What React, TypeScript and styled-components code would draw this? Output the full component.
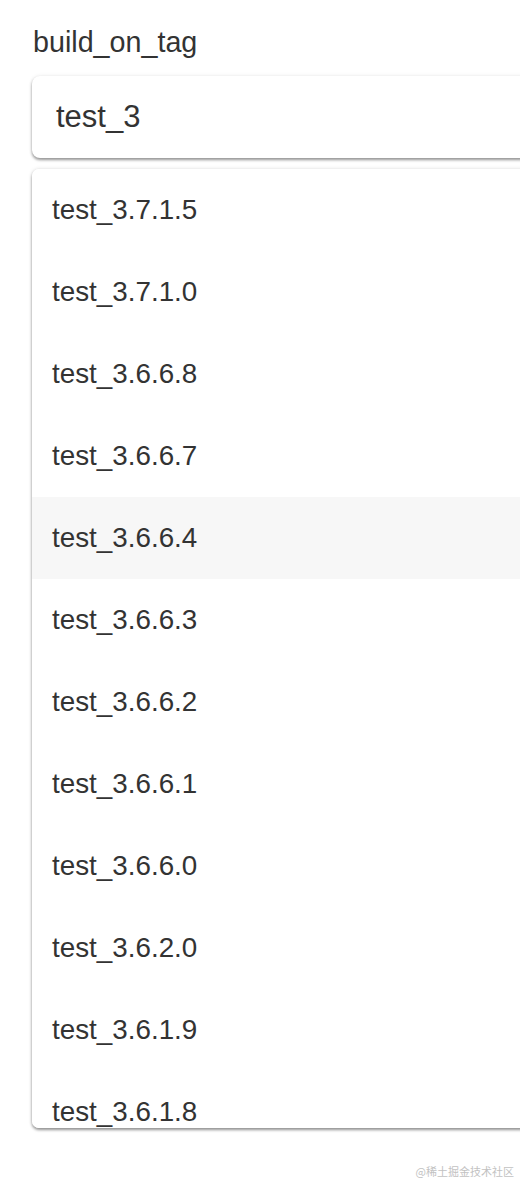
import React from 'react';
import styled, { createGlobalStyle } from 'styled-components';

const GlobalStyle = createGlobalStyle`
    html, body {
        margin: 0;
        padding: 0;
        background: #ffffff;
        font-family: "Liberation Sans", Arial, sans-serif;
        overflow: hidden;
    }
`;

const Page = styled.div`
    width: 520px;
    height: 1184px;
    padding: 24px 0 0 32px;
    box-sizing: border-box;
    position: relative;
    overflow: hidden;
`;

const Label = styled.div`
    font-size: 28.7px;
    line-height: 36px;
    color: #333333;
    margin: 0 0 16px 1px;
`;

const Input = styled.div`
    width: 520px;
    height: 82px;
    box-sizing: border-box;
    padding: 0 24px;
    display: flex;
    align-items: center;
    font-size: 31px;
    color: #333333;
    background: #ffffff;
    border-radius: 8px;
    box-shadow: 0 2px 3px rgba(0, 0, 0, 0.4), 0 0 4px rgba(0, 0, 0, 0.08);
`;

const Menu = styled.div`
    margin-top: 11px;
    width: 520px;
    height: 959px;
    overflow: hidden;
    background: #ffffff;
    border-radius: 7px;
    box-shadow: 0 2px 3px rgba(0, 0, 0, 0.4), 0 0 4px rgba(0, 0, 0, 0.12);
    display: flex;
    flex-direction: column;
`;

const Option = styled.div<{ $active?: boolean }>`
    flex: 0 0 82px;
    display: flex;
    align-items: center;
    padding-left: 20px;
    font-size: 27.8px;
    color: #333333;
    background: ${(p) => (p.$active ? '#f7f7f7' : '#ffffff')};
`;

const Watermark = styled.div`
    position: absolute;
    right: 6px;
    bottom: 5px;
    font-family: "Noto Sans CJK SC", sans-serif;
    font-size: 11px;
    color: #c2c2c2;
`;

const options = [
    'test_3.7.1.5',
    'test_3.7.1.0',
    'test_3.6.6.8',
    'test_3.6.6.7',
    'test_3.6.6.4',
    'test_3.6.6.3',
    'test_3.6.6.2',
    'test_3.6.6.1',
    'test_3.6.6.0',
    'test_3.6.2.0',
    'test_3.6.1.9',
    'test_3.6.1.8',
];

export default function App() {
    return (
        <>
            <GlobalStyle />
            <Page>
                <Label>build_on_tag</Label>
                <Input>test_3</Input>
                <Menu>
                    {options.map((o, i) => (
                        <Option key={o} $active={i === 4}>
                            {o}
                        </Option>
                    ))}
                </Menu>
                <Watermark>@稀土掘金技术社区</Watermark>
            </Page>
        </>
    );
}
